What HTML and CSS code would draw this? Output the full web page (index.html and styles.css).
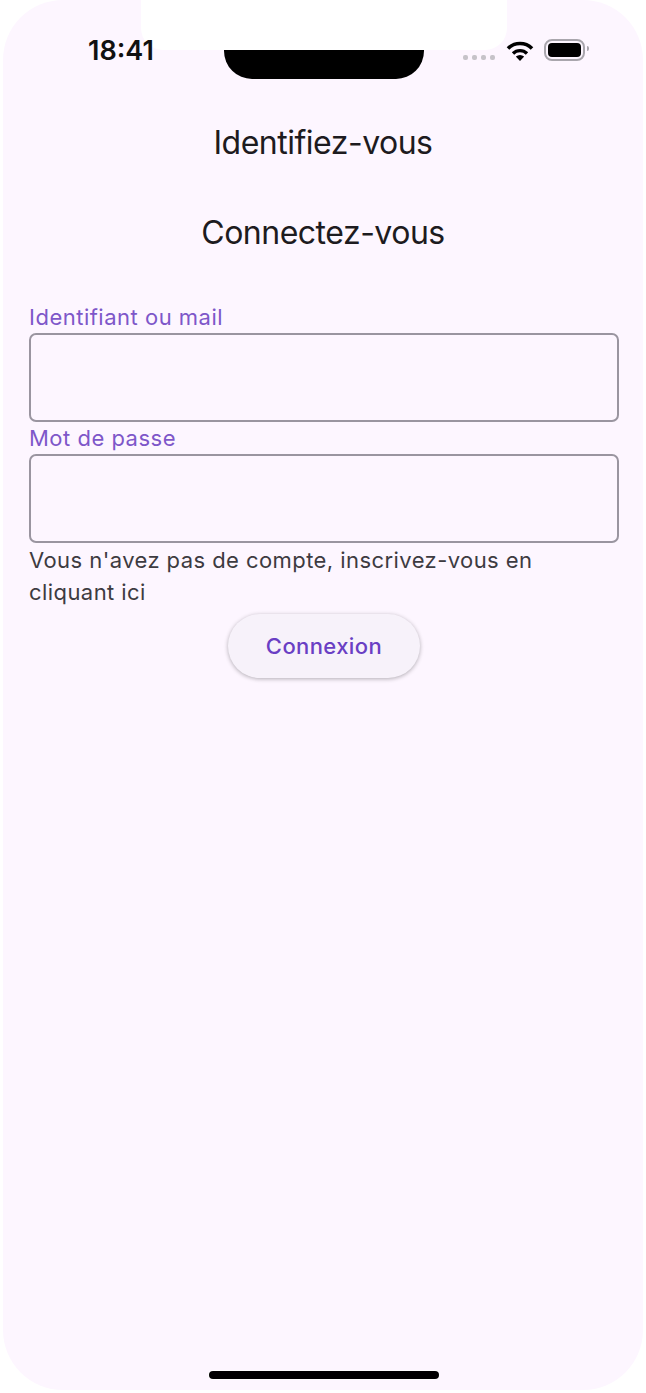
FILE: index.html
```html
<!DOCTYPE html>
<html lang="fr">
<head>
    <meta charset="UTF-8">
    <meta name="viewport" content="width=device-width, initial-scale=1.0">
    <title>Identifiez-vous</title>
    <link rel="stylesheet" href="styles.css">
</head>
<body>

    <div class="phone">
        <!-- découpe du haut -->
        <div class="top-tab"></div>
        <div class="notch"></div>

        <div class="status-bar">
            <span class="clock">18:41</span>
            <div class="status-icons">
                <div class="signal"><i></i><i></i><i></i><i></i></div>
                <svg class="wifi" width="28" height="21" viewBox="0 0 28 21">
                    <path d="M2 8.500A17 17 0 0 1 26 8.500" fill="none" stroke="#000" stroke-width="3.600"/>
                    <path d="M7 13.500A10 10 0 0 1 21 13.500" fill="none" stroke="#000" stroke-width="3.400"/>
                    <path d="M14 21L9.800 16.600Q14 13.600 18.200 16.600Z" fill="#000"/>
                </svg>
                <div class="battery"><div class="battery-fill"></div></div>
            </div>
        </div>

        <h1 class="page-title">Identifiez-vous</h1>
        <h2 class="form-title">Connectez-vous</h2>

        <form class="login-form">
            <label class="field-label" for="login">Identifiant ou mail</label>
            <input class="field-input" id="login" type="text">
            <label class="field-label" for="password">Mot de passe</label>
            <input class="field-input" id="password" type="password">
            <p class="signup-text">Vous n'avez pas de compte, inscrivez-vous en cliquant ici</p>
            <button class="submit-btn" type="button">Connexion</button>
        </form>

        <div class="home-bar"></div>
    </div>

</body>
</html>
```

FILE: styles.css
```css
html, body {
    margin: 0;
    padding: 0;
    background-color: #fff;
}

body {
    font-family: Inter, Roboto, "Liberation Sans", sans-serif;
    color: #1d1b20;
}

.phone {
    position: relative;
    width: 640px;
    height: 1390px;
    margin-left: 3px;
    background-color: #fdf6ff;
    border-radius: 60px;
    overflow: hidden;
}

.top-tab {
    position: absolute;
    top: 0;
    left: 138px;
    width: 366px;
    height: 50px;
    background-color: #fff;
    border-radius: 0 0 22px 22px;
}

.notch {
    position: absolute;
    top: 50px;
    left: 221px;
    width: 200px;
    height: 29px;
    background-color: #000;
    border-radius: 0 0 28px 28px;
}

.status-bar {
    position: relative;
    display: flex;
    justify-content: space-between;
    align-items: center;
    height: 100px;
    padding: 0 54px 0 85px;
    box-sizing: border-box;
}

.clock {
    font-size: 27px;
    font-weight: 600;
    color: #111;
}

.status-icons {
    display: flex;
    align-items: center;
    gap: 10px;
}

.signal {
    display: flex;
    gap: 4px;
    margin: 14px 1px 0 0;
}

.signal i {
    display: block;
    width: 5px;
    height: 5px;
    border-radius: 2px;
    background-color: #c6c3c9;
}

.battery {
    position: relative;
    width: 41px;
    height: 22px;
    margin-right: 4px;
    box-sizing: border-box;
    padding: 2px;
    border: 2px solid #a9a6ad;
    border-radius: 8px;
}

.battery::after {
    content: "";
    position: absolute;
    top: 5px;
    right: -6px;
    width: 2px;
    height: 5px;
    background-color: #a9a6ad;
    border-radius: 0 2px 2px 0;
}

.battery-fill {
    height: 100%;
    background-color: #000;
    border-radius: 4px;
}

.page-title,
.form-title {
    margin: 0;
    text-align: center;
    font-weight: 400;
    font-size: 32px;
    line-height: 40px;
    letter-spacing: -0.5px;
}

.page-title {
    margin-top: 23px;
}

.form-title {
    margin-top: 50px;
}

.login-form {
    display: flex;
    flex-direction: column;
    padding: 0 24px 0 26px;
    margin-top: 48px;
}

.field-label {
    font-size: 22px;
    line-height: 32px;
    letter-spacing: 0.5px;
    color: #7e57c9;
}

.field-input {
    display: block;
    box-sizing: border-box;
    width: 100%;
    height: 89px;
    margin: 0;
    background: transparent;
    border: 2px solid #9a95a0;
    border-radius: 7px;
    outline: none;
}

.signup-text {
    margin: 0;
    padding-top: 1px;
    font-size: 22px;
    line-height: 32px;
    letter-spacing: 0.43px;
    color: #3d3b41;
}

.submit-btn {
    align-self: center;
    width: 192px;
    height: 64px;
    margin-top: 6px;
    background-color: #f7f2fa;
    border: none;
    border-radius: 32px;
    box-shadow: 0 1px 4px rgba(0, 0, 0, 0.3);
    font-family: inherit;
    font-size: 22px;
    font-weight: 500;
    letter-spacing: 0.4px;
    color: #6a3fc4;
    cursor: pointer;
}

.home-bar {
    position: absolute;
    left: 206px;
    bottom: 11px;
    width: 230px;
    height: 8px;
    background-color: #000;
    border-radius: 4px;
    box-shadow: 0 0 0 1px #fff;
}
```
